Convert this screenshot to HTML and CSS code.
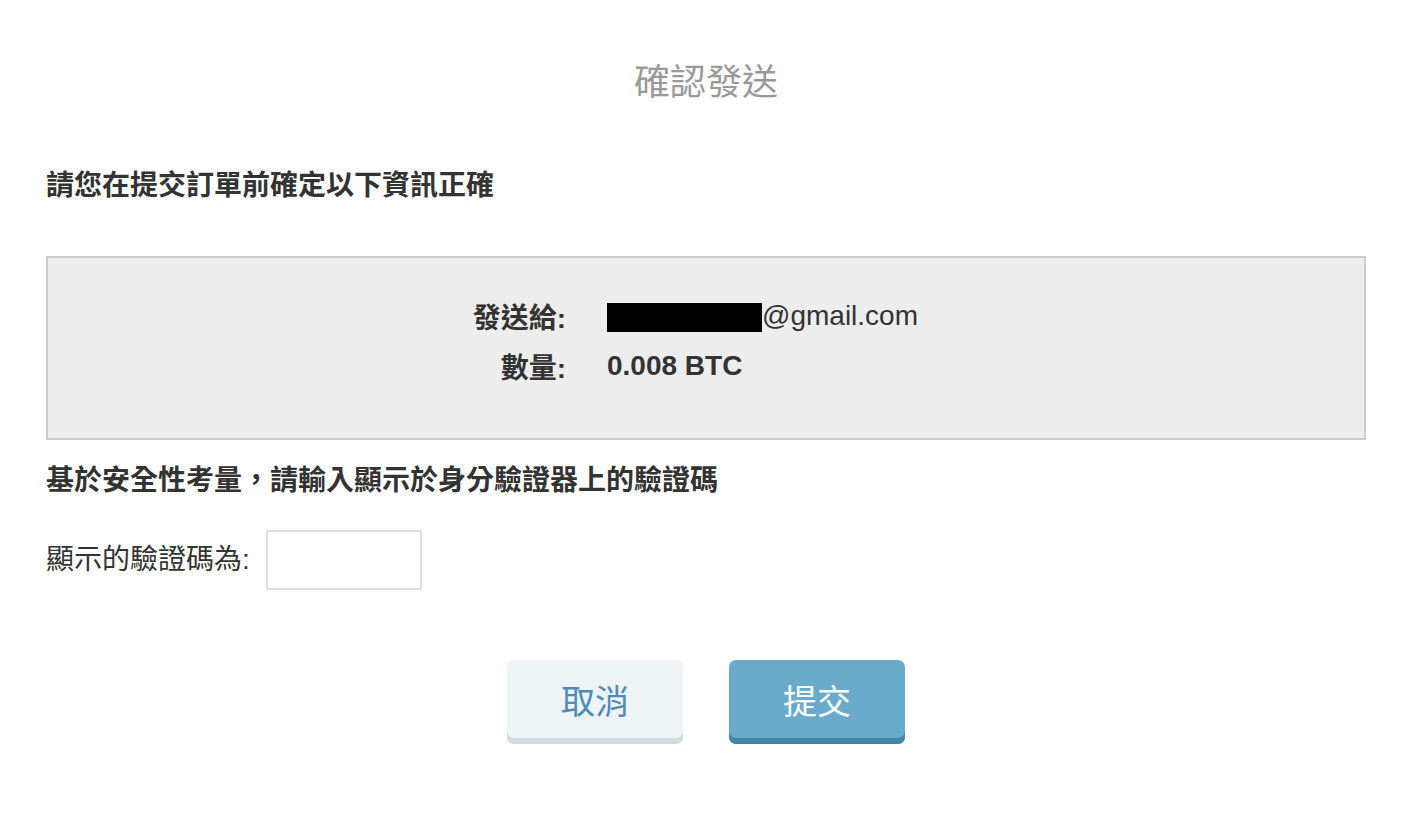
FILE: index.html
```html
<!DOCTYPE html>
<html lang="zh-Hant">
<head>
<meta charset="utf-8">
<title>確認發送</title>
<link rel="stylesheet" href="styles.css">
</head>
<body>
<main class="page">
  <h1 class="title">確認發送</h1>
  <h2 class="notice">請您在提交訂單前確定以下資訊正確</h2>
  <section class="summary">
    <div class="row">
      <span class="label">發送給:</span>
      <span class="value email"><span class="redact"></span>@gmail.com</span>
    </div>
    <div class="row">
      <span class="label">數量:</span>
      <span class="value amount">0.008 BTC</span>
    </div>
  </section>
  <h2 class="notice notice-2">基於安全性考量，請輸入顯示於身分驗證器上的驗證碼</h2>
  <div class="code-row">
    <label class="code-label" for="code">顯示的驗證碼為:</label>
    <input class="code-input" id="code" type="text">
  </div>
  <div class="actions">
    <button class="btn btn-cancel" type="button">取消</button>
    <button class="btn btn-submit" type="button">提交</button>
  </div>
</main>
</body>
</html>
```

FILE: styles.css
```css
* { box-sizing: border-box; }
html, body { margin: 0; padding: 0; background: #fff; }
body {
  font-family: "Liberation Sans", "Noto Sans CJK TC", sans-serif;
  color: #333;
}
.page {
  padding: 0 48px 0 46px;
}
.title {
  margin: 0;
  padding-top: 57px;
  font-family: "Noto Sans CJK TC", sans-serif;
  font-weight: 400;
  font-size: 36px;
  line-height: 44px;
  color: #999;
  text-align: center;
  letter-spacing: 0;
}
.notice {
  margin: 0;
  padding-top: 65px;
  font-size: 28px;
  line-height: 40px;
  font-weight: 700;
  color: #333;
}
.summary {
  margin-top: 50px;
  height: 184px;
  background: #ededed;
  border: 2px solid #cccccc;
  padding-top: 33px;
}
.row {
  display: grid;
  grid-template-columns: 518px 1fr;
  column-gap: 41px;
  height: 50px;
  align-items: center;
  font-size: 28px;
}
.label {
  text-align: right;
  font-weight: 700;
}
.value { font-weight: 400; }
.amount { font-weight: 700; }
.email { display: flex; align-items: center; }
.redact {
  display: inline-block;
  width: 155px;
  height: 29px;
  background: #000;
  margin-top: 2px;
}
.notice-2 { padding-top: 21px; }
.code-row {
  display: flex;
  align-items: center;
  gap: 16px;
  margin-top: 29px;
}
.code-label {
  font-size: 28px;
  line-height: 40px;
}
.code-input {
  width: 156px;
  height: 60px;
  border: 2px solid #dddddd;
  border-radius: 0;
  background: #fff;
  margin: 0;
  outline: none;
}
.actions {
  display: flex;
  justify-content: center;
  gap: 46px;
  margin-top: 70px;
}
.btn {
  width: 176px;
  height: 84px;
  border: 0;
  border-radius: 7px;
  font-family: "Noto Sans CJK TC", sans-serif;
  font-size: 34px;
  padding: 0 0 6px;
  cursor: pointer;
}
.btn-cancel {
  background: #eef3f6;
  color: #4d8bbb;
  box-shadow: inset 0 -6px 0 #cfdcdd;
}
.btn-submit {
  background: #6aaaca;
  color: #fff;
  box-shadow: inset 0 -6px 0 #3f88a8;
}
```
